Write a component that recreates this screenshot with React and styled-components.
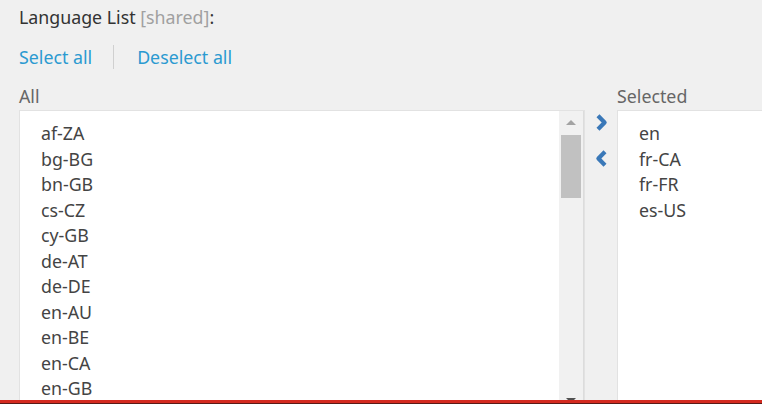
import React from 'react'
import styled, { createGlobalStyle } from 'styled-components'

const GlobalStyle = createGlobalStyle`
  html, body {
    margin: 0;
    padding: 0;
    background: #f0f0f0;
    overflow: hidden;
  }
  body {
    font-family: "Noto Sans", "Open Sans", sans-serif;
    font-size: 17.8px;
    color: #333;
  }
`

const allLanguages = [
  'af-ZA', 'bg-BG', 'bn-GB', 'cs-CZ', 'cy-GB', 'de-AT', 'de-DE',
  'en-AU', 'en-BE', 'en-CA', 'en-GB',
]
const selectedLanguages = ['en', 'fr-CA', 'fr-FR', 'es-US']

const Page = styled.div`
  padding: 6px 0 0 19px;
  width: 900px;
`

const Title = styled.div`
  line-height: 22px;
  color: #333;
`

const Muted = styled.span`
  color: #a0a0a0;
`

const Actions = styled.div`
  display: flex;
  align-items: center;
  margin-top: 17px;
  height: 24px;
`

const ActionLink = styled.a`
  color: #2b9ad0;
  text-decoration: none;
  line-height: 22px;
  cursor: pointer;
`

const Divider = styled.span`
  width: 1px;
  height: 24px;
  background: #d0d0d0;
  margin: 0 23px 0 21px;
`

const Picker = styled.div`
  display: flex;
  margin-top: 16px;
`

const Column = styled.div`
  display: flex;
  flex-direction: column;
  width: ${p => p.$width}px;
`

const Label = styled.div`
  color: #666;
  line-height: 22px;
  height: 22px;
  margin-bottom: 3px;
`

const Box = styled.div`
  display: flex;
  height: 296px;
  background: #fff;
  border: 1px solid #e2e2e2;
  border-bottom: none;
  overflow: hidden;
`

const List = styled.ul`
  flex: 1;
  list-style: none;
  margin: 0;
  padding: 10px 0 0 21px;
`

const Item = styled.li`
  line-height: 25.5px;
  color: #444;
`

const Track = styled.div`
  position: relative;
  width: 24px;
  background: #f1f1f1;
  border-right: 1px solid #dcdcdc;
`

const Thumb = styled.div`
  position: absolute;
  left: 2px;
  right: 2px;
  top: 24px;
  height: 63px;
  background: #c1c1c1;
`

const Arrow = styled.div`
  position: absolute;
  left: 7px;
  width: 0;
  height: 0;
  border-left: 5px solid transparent;
  border-right: 5px solid transparent;
  ${p => (p.$down
    ? 'bottom: 4px; border-top: 5px solid #505050;'
    : 'top: 9px; border-bottom: 5px solid #a3a3a3;')}
`

const Mover = styled.div`
  width: 32px;
  display: flex;
  flex-direction: column;
  align-items: center;
  gap: 18px;
  padding-top: 28px;
`

const MoveButton = styled.button`
  border: none;
  background: none;
  padding: 0;
  width: 16px;
  height: 18px;
  display: flex;
  align-items: center;
  justify-content: center;
  cursor: pointer;
`

const RedBar = styled.div`
  position: fixed;
  left: 0;
  right: 0;
  bottom: 0;
  height: 3px;
  background: #d42a1f;
  border-bottom: 1px solid #5a1a16;
`

const Chevron = ({ dir }) => (
  <svg width="13" height="19" viewBox="0 0 13 19">
    <polyline
      points={dir === 'right' ? '3,2.8 9.6,9.5 3,16.2' : '10,2.8 3.4,9.5 10,16.2'}
      fill="none"
      stroke="#3a78b8"
      strokeWidth="4.2"
      strokeLinejoin="round"
    />
  </svg>
)

const App = () => {
  return (
    <>
      <GlobalStyle />
      <Page>
        <Title>
          Language List <Muted>[shared]</Muted>:
        </Title>
        <Actions>
          <ActionLink>Select all</ActionLink>
          <Divider />
          <ActionLink>Deselect all</ActionLink>
        </Actions>
        <Picker>
          <Column $width={566}>
            <Label>All</Label>
            <Box>
              <List>
                {allLanguages.map(lang => (
                  <Item key={lang}>{lang}</Item>
                ))}
              </List>
              <Track>
                <Arrow />
                <Thumb />
                <Arrow $down />
              </Track>
            </Box>
          </Column>
          <Mover>
            <MoveButton>
              <Chevron dir="right" />
            </MoveButton>
            <MoveButton>
              <Chevron dir="left" />
            </MoveButton>
          </Mover>
          <Column $width={300}>
            <Label>Selected</Label>
            <Box>
              <List>
                {selectedLanguages.map(lang => (
                  <Item key={lang}>{lang}</Item>
                ))}
              </List>
            </Box>
          </Column>
        </Picker>
      </Page>
      <RedBar />
    </>
  )
}

export default App
